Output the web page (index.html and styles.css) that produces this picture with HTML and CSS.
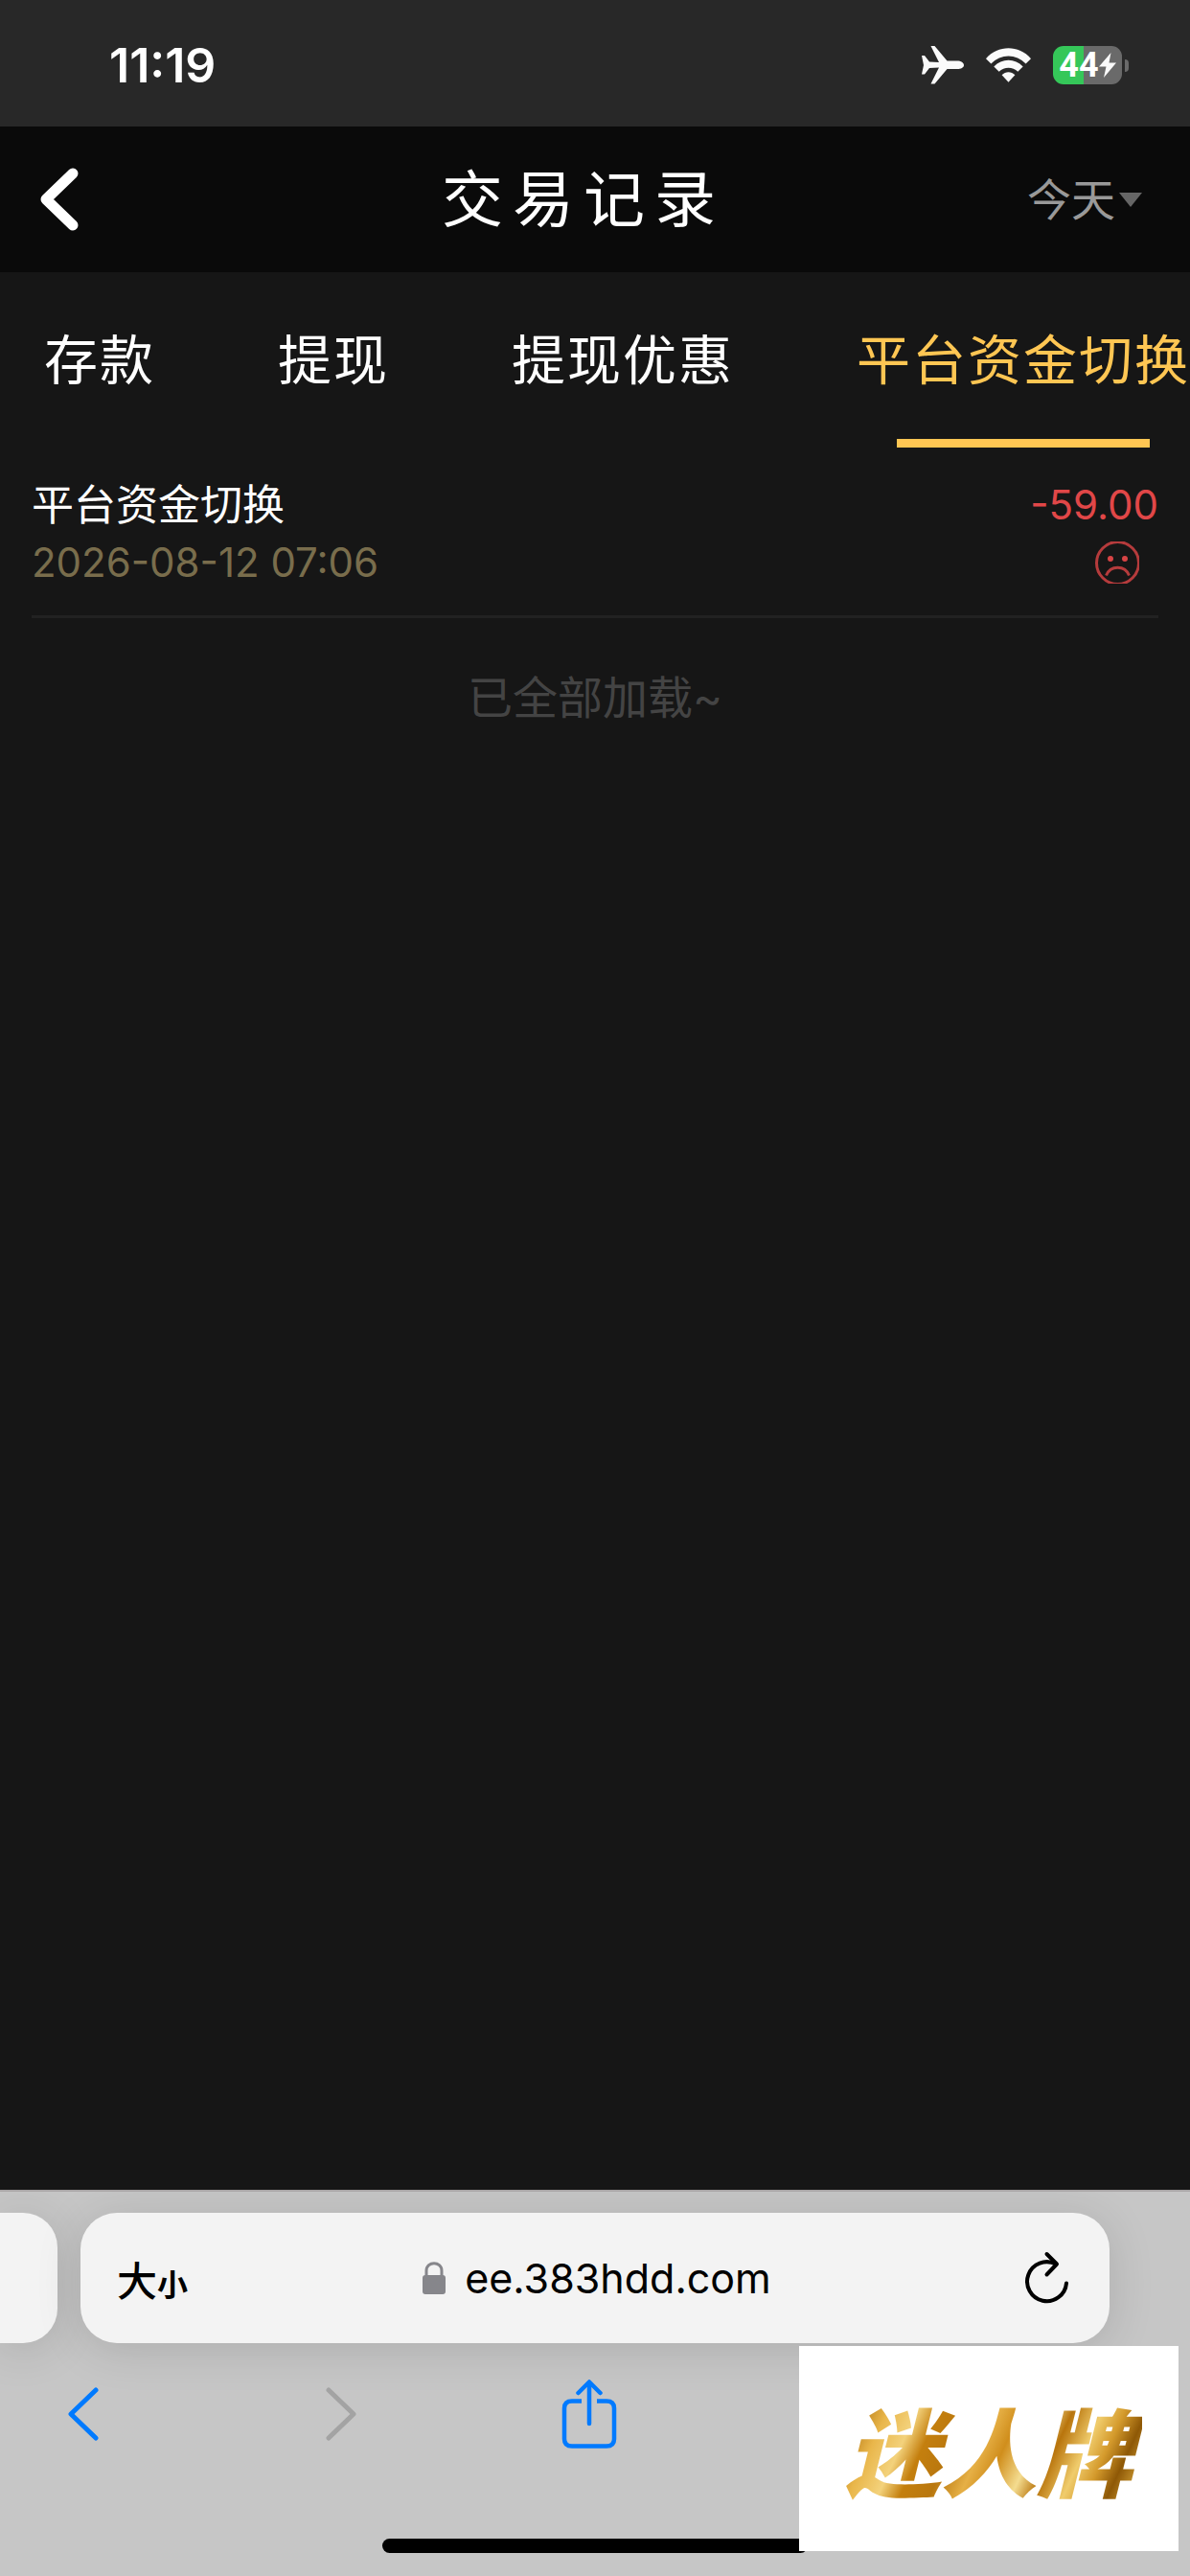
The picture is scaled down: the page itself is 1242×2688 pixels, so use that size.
FILE: index.html
```html
<!DOCTYPE html>
<html lang="zh-CN">
<head>
<meta charset="utf-8">
<meta name="viewport" content="width=device-width, initial-scale=1">
<title>交易记录</title>
<link rel="stylesheet" href="styles.css">
</head>
<body>
<div class="status-bar">
  <time class="clock">11:19</time>
  <div class="status-icons">
    <svg class="plane" width="44" height="40" viewBox="0 0 44 40" aria-hidden="true"><path d="M0 10h3l5 6.500 10 .6L9.500 0H13.500L26.500 15.500H37C41 15.500 44 17.500 44 20S41 24 37 24H26.500L13.500 39.500H9.500L18 22.500l-10 .6L3 29.500H0L2 20Z" fill="#fafafa"/></svg>
    <svg class="wifi" width="47" height="36" viewBox="0 0 48 36" aria-hidden="true"><g fill="#fafafa"><path d="M0 11C13-3.700 35-3.700 48 11l-5.500 5.500C32 5.500 16 5.500 5.500 16.500Z"/><path d="M8.500 19.500C17 10.500 31 10.500 39.500 19.500L34 25C28.500 19.300 19.500 19.300 14 25Z"/><path d="M17 28.500C21 24.500 27 24.500 31 28.500L24 36Z"/></g></svg>
    <div class="battery">
      <span class="battery-cell"><span class="battery-text">44</span><svg width="18" height="26" viewBox="0 0 18 26" aria-hidden="true"><path d="M12.500 0 0 14.500h7.500L5 26 18 10.500h-7.500Z" fill="#fafafa"/></svg></span>
      <span class="battery-nub"></span>
    </div>
  </div>
</div>

<header class="app-header">
  <button class="back" type="button" aria-label="返回"><svg width="40" height="66" viewBox="0 0 40 66"><path d="M34 6 6 33 34 60" fill="none" stroke="#fff" stroke-width="11" stroke-linecap="round" stroke-linejoin="round"/></svg></button>
  <h1>交易记录</h1>
  <label class="range">
    <select aria-label="日期"><option>今天</option></select>
    <svg width="24" height="15" viewBox="0 0 24 15" aria-hidden="true"><path d="M0 0h24L12 15Z" fill="#666"/></svg>
  </label>
</header>

<nav class="tabs">
  <a href="#deposit">存款</a>
  <a href="#withdraw">提现</a>
  <a href="#bonus">提现优惠</a>
  <a href="#transfer" class="active">平台资金切换</a>
</nav>

<main class="content">
  <ul class="records">
    <li class="record">
      <div class="record-info">
        <span class="name">平台资金切换</span>
        <time class="date">2026-08-12 07:06</time>
      </div>
      <div class="record-result">
        <span class="amount">-59.00</span>
        <svg class="face" width="46" height="44" viewBox="0 0 46 44" role="img" aria-label="失败"><g fill="none" stroke="#b53b3c" stroke-width="3"><circle cx="23.500" cy="22.500" r="22"/><path d="M11.500 35.500C16 24.500 31 24.500 35.500 35.500"/></g><g fill="#d84445"><circle cx="16" cy="18" r="3"/><circle cx="31" cy="18" r="3"/></g></svg>
      </div>
    </li>
  </ul>
  <p class="end">已全部加载~</p>
</main>

<footer class="browser">
  <div class="address-row">
    <div class="prev-tab"></div>
    <div class="address">
      <button type="button" class="text-size" aria-label="大小"><span class="big">大</span><span class="small">小</span></button>
      <button type="button" class="url"><svg width="24" height="34" viewBox="0 0 24 34" aria-hidden="true"><rect y="14" width="24" height="20" rx="3" fill="#86868b"/><path d="M4 15V9.500C4-.8 20-.8 20 9.500V15" fill="none" stroke="#86868b" stroke-width="3"/></svg><span>ee.383hdd.com</span></button>
      <button type="button" class="reload" aria-label="刷新"><svg width="46" height="56" viewBox="0 0 46 56"><g fill="none" stroke="#000" stroke-width="4" stroke-linecap="round" stroke-linejoin="round"><path d="M43 33.500A20.500 20.500 0 1 1 32 13.500"/><path d="M22.500 3 33 13.500 22.500 24.500"/></g></svg></button>
    </div>
  </div>
  <div class="toolbar">
    <button type="button" aria-label="后退"><svg width="58" height="72" viewBox="0 0 58 72"><path d="M42 11 16 36 42 61" fill="none" stroke="#007aff" stroke-width="5" stroke-linecap="round" stroke-linejoin="round"/></svg></button>
    <button type="button" aria-label="前进" disabled><svg width="58" height="72" viewBox="0 0 58 72"><path d="M21 11 47 36 21 61" fill="none" stroke="#a3a3a3" stroke-width="5" stroke-linecap="round" stroke-linejoin="round"/></svg></button>
    <button type="button" aria-label="分享"><svg width="58" height="72" viewBox="0 0 58 72"><g fill="none" stroke="#007aff" stroke-width="4.500"><path d="M21 22.500H11Q3 22.500 3 30V62Q3 69.500 11 69.500H47Q55 69.500 55 62V30Q55 22.500 47 22.500H37"/><path d="M29 46V3M17.500 14 29 2.500 40.500 14" stroke-linecap="round" stroke-linejoin="round"/></g></svg></button>
  </div>
  <div class="home-indicator"></div>
  <div class="brand"><span>迷人牌</span></div>
</footer>
</body>
</html>
```
FILE: styles.css
```css
* {
  box-sizing: border-box;
}

body {
  margin: 0;
  min-height: 100vh;
  display: flex;
  flex-direction: column;
  overflow-x: hidden;
  background: #161616;
  color: #fff;
  font-family: Inter, "Noto Sans CJK SC", sans-serif;
  font-size: 42px;
}

button,
select {
  padding: 0;
  border: 0;
  background: none;
  color: inherit;
  font: inherit;
}

svg {
  display: block;
  flex: none;
}

.status-bar {
  display: flex;
  justify-content: space-between;
  height: 132px;
  padding: 0 64px 0 114px;
  background: #282828;
}

.clock {
  font-size: 50px;
  font-weight: 600;
  line-height: 136px;
}

.status-icons {
  display: flex;
  align-items: center;
  gap: 23px;
  height: 136px;
}

.battery {
  display: flex;
  align-items: center;
  gap: 3px;
}

.battery-cell {
  display: flex;
  align-items: center;
  justify-content: center;
  width: 72px;
  height: 40px;
  border-radius: 11px;
  background: linear-gradient(90deg, #35c759 32px, #6a6a6a 32px);
}

.battery-text {
  font: 700 36px/40px Roboto, sans-serif;
}

.battery-nub {
  width: 4px;
  height: 13px;
  border-radius: 0 4px 4px 0;
  background: #6a6a6a;
}

.app-header {
  display: grid;
  grid-template-columns: 1fr auto 1fr;
  align-items: center;
  height: 152px;
  padding: 0 50px 0 42px;
  background: #0a0a0a;
}

.back {
  justify-self: start;
}

h1 {
  margin: 0 16px 0 0;
  font-size: 64px;
  font-weight: 400;
  line-height: 96px;
  letter-spacing: 10px;
}

.range {
  display: flex;
  align-items: center;
  justify-self: end;
  gap: 4px;
  color: #999;
}

.range select {
  appearance: none;
  font-size: 46px;
  line-height: 64px;
}

.tabs {
  display: flex;
  gap: 128px;
  height: 184px;
  padding: 0 46px;
  overflow: hidden;
  font-size: 56px;
  letter-spacing: 2px;
}

.tabs a {
  display: flex;
  flex: none;
  flex-direction: column;
  align-items: center;
  color: #fff;
  line-height: 184px;
  text-decoration: none;
  white-space: nowrap;
}

.tabs .active {
  color: #ffc653;
}

.tabs .active::after {
  content: "";
  width: 76%;
  height: 9px;
  margin-top: -10px;
  background: #ffc653;
}

.content {
  flex: 1;
  padding: 29px 33px;
}

.records {
  margin: 0;
  padding: 0;
  list-style: none;
}

.record {
  display: flex;
  justify-content: space-between;
  height: 148px;
  border-bottom: 3px solid #222;
  line-height: 60px;
}

.record-info,
.record-result {
  display: flex;
  flex-direction: column;
}

.record-result {
  align-items: flex-end;
}

.name {
  font-size: 44px;
}

.date {
  color: #796d4c;
}

.amount {
  color: #e14748;
}

.face {
  margin: 8px 20px 0 0;
}

.end {
  margin: 51px 0 0;
  color: #444;
  font-size: 47px;
  line-height: 64px;
  text-align: center;
}

.browser {
  position: relative;
  padding: 22px 0 24px;
  border-top: 2px solid #aaa6a7;
  background: #c6c6c6;
  overflow: hidden;
}

.address-row {
  display: flex;
  gap: 24px;
  padding-right: 84px;
}

.prev-tab,
.address {
  height: 136px;
  background: #f3f3f3;
  box-shadow: 0 6px 48px rgba(0, 0, 0, 0.13);
}

.prev-tab {
  width: 60px;
  border-radius: 0 36px 36px 0;
}

.address {
  display: grid;
  grid-template-columns: 1fr auto 1fr;
  align-items: center;
  flex: 1;
  padding: 0 42px 0 38px;
  border-radius: 38px;
  color: #000;
}

.text-size {
  display: flex;
  align-items: baseline;
  justify-self: start;
  font-weight: 500;
}

.small {
  font-size: 32px;
  font-weight: 700;
}

.url {
  display: flex;
  align-items: center;
  gap: 20px;
  padding-left: 8px;
  font-size: 43px;
}

.reload {
  justify-self: end;
}

.toolbar {
  display: flex;
  gap: 206px;
  padding: 38px 58px 0;
}

.home-indicator {
  width: 444px;
  height: 15px;
  margin: 94px auto 0;
  border-radius: 8px;
  background: #000;
}

.brand {
  position: absolute;
  right: 12px;
  bottom: 26px;
  display: flex;
  align-items: center;
  justify-content: center;
  width: 396px;
  height: 214px;
  background: #fff;
}

.brand span {
  padding: 0 10px;
  background: linear-gradient(115deg, #a86a08 8%, #e9b64a 18%, #f3d27c 26%, #c47f0e 32%, #b9770e 40%, #e6b046 48%, #d08e1c 54%, #f4dc90 62%, #b8740c 68%, #f0cc6c 76%, #d49a2c 82%, #8e5806 88%, #dfae40 96%);
  background-clip: text;
  color: transparent;
  font-family: "Noto Sans CJK SC", sans-serif;
  font-size: 100px;
  font-style: italic;
  font-weight: 900;
  line-height: 144px;
}
```
